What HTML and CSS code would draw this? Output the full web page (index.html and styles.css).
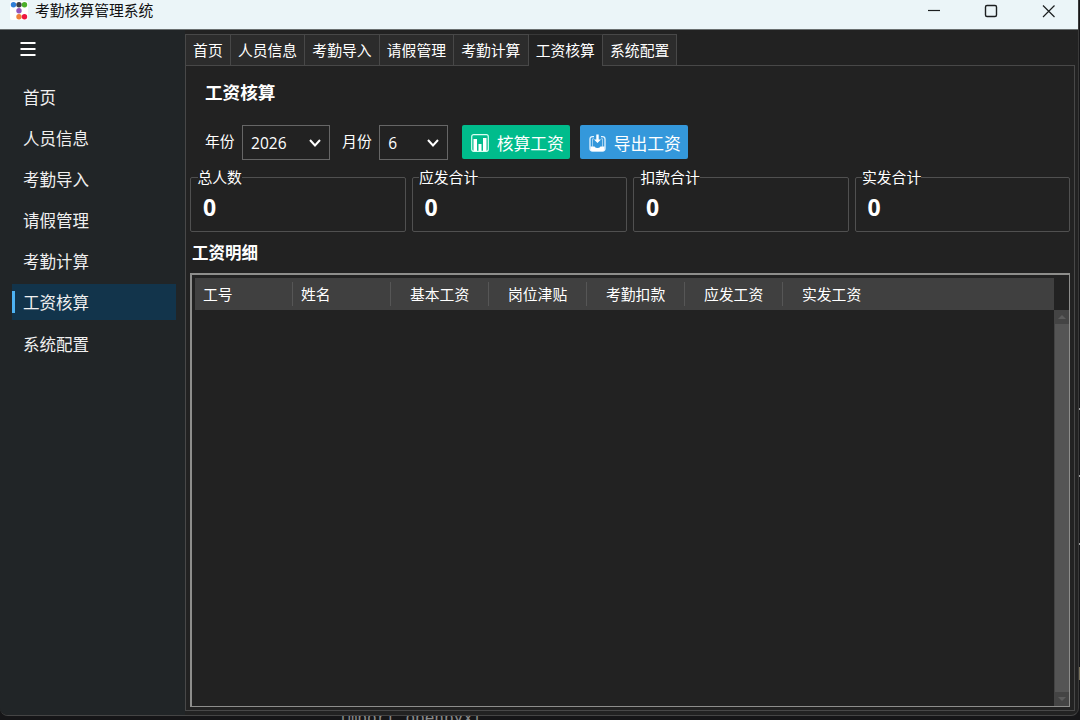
FILE: index.html
```html
<!DOCTYPE html>
<html lang="zh-CN">
<head>
  <meta charset="UTF-8" />
  <meta name="viewport" content="width=device-width, initial-scale=1.0"/>
  <title>考勤核算管理系统</title>
  <link rel="stylesheet" href="styles.css">
</head>
<body>

  <div class="behind">import openpyxl</div>
  <i class="mark mark-1"></i>
  <i class="mark mark-2"></i>
  <i class="mark mark-3"></i>
  <i class="mark mark-4"></i>

  <div class="window">
    <header class="titlebar">
      <svg class="logo" width="18" height="19" viewBox="0 0 18 19">
        <rect width="18" height="19" rx="2" fill="#fff"/>
        <circle cx="3.500" cy="3.800" r="2.700" fill="#2f7fd8"/>
        <circle cx="9" cy="3.800" r="2.700" fill="#3c3f45"/>
        <circle cx="14.500" cy="3.800" r="2.700" fill="#4caf2a"/>
        <circle cx="9" cy="9.800" r="2.700" fill="#9355bd"/>
        <circle cx="9" cy="15.800" r="2.700" fill="#f0803a"/>
        <circle cx="14.500" cy="15.800" r="2.700" fill="#ee1540"/>
      </svg>
      <span class="app-name">考勤核算管理系统</span>
      <svg class="controls" width="130" height="20" viewBox="0 0 130 20" fill="none" stroke="#1c1f20" stroke-width="1.2">
        <path d="M1 10.500h12"/>
        <rect x="58.500" y="5.500" width="11" height="11" rx="1.500" stroke-width="1.400"/>
        <path d="M116 5.500l11.500 11.500M127.500 5.500l-11.500 11.500"/>
      </svg>
    </header>

    <div class="body">
      <nav class="sidebar">
        <svg class="menu" width="16" height="14" viewBox="0 0 16 14" stroke="#fff" stroke-width="1.8">
          <path d="M0.500 1h15M0.500 7h15M0.500 13h15"/>
        </svg>
        <a class="nav-item">首页</a>
        <a class="nav-item">人员信息</a>
        <a class="nav-item">考勤导入</a>
        <a class="nav-item">请假管理</a>
        <a class="nav-item">考勤计算</a>
        <a class="nav-item active">工资核算</a>
        <a class="nav-item">系统配置</a>
      </nav>

      <main class="main">
        <div class="tabs">
          <span class="tab">首页</span>
          <span class="tab">人员信息</span>
          <span class="tab">考勤导入</span>
          <span class="tab">请假管理</span>
          <span class="tab">考勤计算</span>
          <span class="tab active">工资核算</span>
          <span class="tab">系统配置</span>
        </div>

        <section class="panel">
          <h1>工资核算</h1>

          <div class="filters">
            <label>年份</label>
            <div class="select year">2026
              <svg width="12" height="8" viewBox="0 0 12 8" fill="none" stroke="#fff" stroke-width="2"><path d="M1 1l5 5.500 5-5.500"/></svg>
            </div>
            <label>月份</label>
            <div class="select month">6
              <svg width="12" height="8" viewBox="0 0 12 8" fill="none" stroke="#fff" stroke-width="2"><path d="M1 1l5 5.500 5-5.500"/></svg>
            </div>
            <button class="btn green">
              <svg width="18" height="18" viewBox="0 0 18 18">
                <rect x="0.700" y="0.700" width="16.600" height="16.600" rx="2" fill="none" stroke="#d9fff2" stroke-width="1.200"/>
                <path d="M2.500 5h3.500v12H2.500zM7.500 10h3v7h-3zM12 4h3.500v13H12z" fill="#fff"/>
              </svg>
              核算工资
            </button>
            <button class="btn blue">
              <svg width="17" height="18" viewBox="0 0 17 18">
                <path d="M5 2.600H3.500Q1 2.600 1 5v9.500Q1 17 3.500 17h10Q16 17 16 14.500V5q0-2.400-2.500-2.400H12" fill="none" stroke="#e6f4ff" stroke-width="1.300"/>
                <path d="M5 4.800H3.500v8M12 4.800h1.500v8" fill="none" stroke="#b9dcf5" stroke-width="0.800"/>
                <path d="M7.300 0.500h2.400V5.500h2.300L8.500 9 5 5.500h2.300z" fill="#fff"/>
                <path d="M1.500 12.500h4q1 1.500 3 1.500t3-1.500h4v2.500q0 2-2 2h-10q-2 0-2-2z" fill="#fff"/>
              </svg>
              导出工资
            </button>
          </div>

          <div class="cards">
            <fieldset><legend>总人数</legend><b>0</b></fieldset>
            <fieldset><legend>应发合计</legend><b>0</b></fieldset>
            <fieldset><legend>扣款合计</legend><b>0</b></fieldset>
            <fieldset><legend>实发合计</legend><b>0</b></fieldset>
          </div>

          <h2>工资明细</h2>

          <div class="grid">
            <div class="table">
              <div class="thead">
                <span>工号</span>
                <span>姓名</span>
                <span class="num">基本工资</span>
                <span class="num">岗位津贴</span>
                <span class="num">考勤扣款</span>
                <span class="num">应发工资</span>
                <span class="num">实发工资</span>
              </div>
            </div>
            <div class="scrollbar">
              <i class="arrow up"></i>
              <i class="arrow down"></i>
            </div>
          </div>
        </section>
      </main>
    </div>
  </div>

</body>
</html>
```
FILE: styles.css
```css
* {
  margin: 0; padding: 0; box-sizing: border-box;
}
body {
  width: 1080px;
  height: 720px;
  overflow: hidden;
  position: relative;
  background: #161618;
  color: #fff;
  font-family: 'Open Sans', 'Noto Sans CJK SC', sans-serif;
  font-size: 14.8px;
}

/* editor showing behind the window */
.behind {
  position: absolute;
  left: 338px;
  top: 709px;
  font: 16px/18px 'DejaVu Sans Mono', monospace;
  color: #8b8b8b;
}
.mark {
  position: absolute;
  right: 0;
  width: 2px;
  height: 2px;
  background: #999;
}
.mark-1 { top: 408px; }
.mark-2 { top: 475px; }
.mark-3 { top: 543px; }
.mark-4 { top: 667px; height: 13px; width: 1px; background: #77705a; }

.window {
  position: relative;
  width: 1079px;
  height: 716px;
  display: flex;
  flex-direction: column;
  overflow: hidden;
  background: #222;
  border-right: 1px solid #3a3a3a;
  border-bottom: 1px solid #454545;
  border-radius: 0 0 8px 8px;
}
.titlebar {
  height: 30px;
  flex: none;
  display: flex;
  align-items: flex-start;
  padding: 0 21px 0 10px;
  background: #ebf5f8;
  border-bottom: 1px solid #6a6f70;
  color: #111;
}
.logo {
  margin-top: 1px;
}
.app-name {
  margin-left: 7px;
  line-height: 20px;
}
.controls {
  margin-left: auto;
}

.body {
  flex: 1;
  display: flex;
}
.sidebar {
  width: 185px;
  padding: 12px 9px 0 12px;
  background: #212527;
  font-size: 16.5px;
}
.menu {
  display: block;
  margin: 0 0 23px 8px;
}
.nav-item {
  display: flex;
  align-items: center;
  height: 36px;
  margin-bottom: 5.1px;
  padding-left: 11px;
  color: #f0f0f0;
}
.nav-item.active {
  position: relative;
  background: #12344b;
}
.nav-item.active::before {
  content: '';
  position: absolute;
  left: 0;
  top: 7px;
  width: 3px;
  height: 22px;
  background: #4db2f2;
}

.main {
  flex: 1;
  display: flex;
  flex-direction: column;
  padding: 4px 3px 4px 0;
}
.tabs {
  display: flex;
  height: 31px;
  border-left: 1px solid #484848;
}
.tab {
  height: 31px;
  padding: 0 7.12px;
  line-height: 31px;
  background: #2c2c2c;
  border-top: 1px solid #484848;
  border-right: 1px solid #484848;
}
.tab.active {
  height: 32px;
  position: relative;
  background: #222;
  border-top-color: #383838;
}
.panel {
  flex: 1;
  display: flex;
  flex-direction: column;
  padding: 0 4px 3px 4px;
  border: 1px solid #484848;
}
h1 {
  margin: 13px 0 0 15px;
  font-size: 17.6px;
  line-height: 26px;
}

.filters {
  display: flex;
  align-items: center;
  height: 34px;
  margin: 20px 0 0 15px;
}
.filters label {
  margin-right: 7.5px;
  margin-top: -3px;
}
.select {
  display: flex;
  align-items: center;
  justify-content: space-between;
  height: 35px;
  padding: 2px 8px 0;
  border: 1px solid #666;
  font-size: 15.5px;
}
.year {
  width: 88px;
  margin-right: 12px;
}
.month {
  width: 69px;
  margin-right: 13.5px;
}
.btn {
  display: flex;
  align-items: center;
  gap: 8px;
  width: 108px;
  height: 34px;
  padding: 2px 0 0 9px;
  margin-right: 10px;
  border: none;
  border-radius: 2px;
  color: #fff;
  font: 16.8px/24px 'Noto Sans CJK SC', sans-serif;
  white-space: nowrap;
}
.green {
  background: #00bc8c;
}
.blue {
  background: #3498db;
}

.cards {
  display: grid;
  grid-template-columns: repeat(4, 1fr);
  gap: 6px;
  margin-top: 7px;
}
fieldset {
  height: 66px;
  min-width: 0;
  padding: 0 12px;
  border: 1px solid #505050;
  border-radius: 2px;
}
legend {
  margin-left: -5.5px;
  line-height: 22px;
}
fieldset b {
  display: block;
  font-size: 23px;
  line-height: 38px;
}
h2 {
  margin: 8px 0 0 2px;
  font-size: 16.5px;
  line-height: 26px;
}

.grid {
  flex: 1;
  display: flex;
  margin-top: 7px;
  padding: 3px 0 0 3px;
  border: 2px solid #8e8e8c;
  border-right-width: 1px;
  border-bottom-width: 1px;
}
.table {
  flex: 1;
}
.thead {
  display: flex;
  height: 32px;
  padding: 4px 0;
  background: #404040;
}
.thead span {
  width: 98px;
  padding-left: 8px;
  line-height: 25px;
  border-right: 1px solid #565656;
}
.thead .num {
  padding-left: 19px;
}
.thead span:last-child {
  border: none;
}
.scrollbar {
  width: 15px;
  margin-top: 32px;
  display: flex;
  flex-direction: column;
  justify-content: space-between;
  background: #555;
  border-left: 1px solid #444;
}
.arrow {
  display: flex;
  align-items: center;
  justify-content: center;
  height: 14px;
  background: #444;
}
.arrow::after {
  content: '';
  border: 4px solid transparent;
}
.up::after {
  border-top: 0;
  border-bottom-color: #5c5c5c;
}
.down::after {
  border-bottom: 0;
  border-top-color: #5c5c5c;
}
```
